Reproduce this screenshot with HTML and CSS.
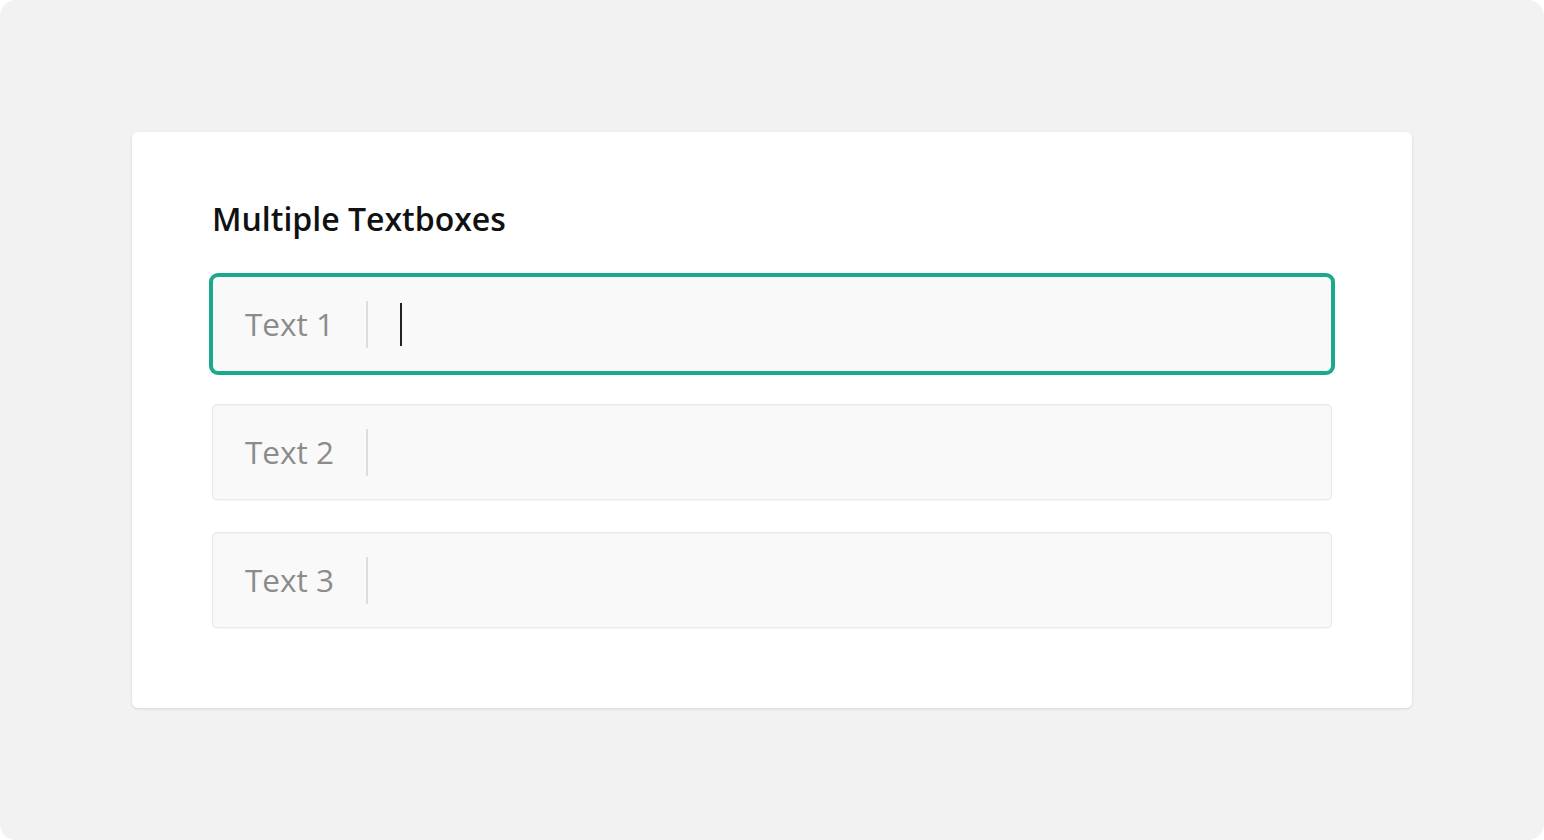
FILE: index.html
```
<!DOCTYPE html>
<html lang="en">
<head>
    <meta charset="UTF-8">
    <meta name="viewport" content="width=device-width, initial-scale=1.0">
    <title>Multiple Textboxes</title>
    <link rel="stylesheet" href="styles.css">
</head>
<body>
    <div class="frame">
        <div class="card">
            <h1 class="card-title">Multiple Textboxes</h1>

            <div class="field-list">
                <div class="field is-focused">
                    <span class="field-label">Text 1</span>
                    <span class="field-divider"></span>
                    <span class="field-value"><span class="caret"></span></span>
                </div>
                <div class="field">
                    <span class="field-label">Text 2</span>
                    <span class="field-divider"></span>
                    <span class="field-value"></span>
                </div>
                <div class="field">
                    <span class="field-label">Text 3</span>
                    <span class="field-divider"></span>
                    <span class="field-value"></span>
                </div>
            </div>
        </div>
    </div>
</body>
</html>
```

FILE: styles.css
```
* {
    margin: 0;
    padding: 0;
    box-sizing: border-box;
}

body {
    font-family: 'Open Sans', 'Noto Sans', sans-serif;
    background: #ffffff;
    height: 100vh;
}

.frame {
    height: 100%;
    background: #f2f2f2;
    border-radius: 16px;
    display: flex;
    align-items: center;
    justify-content: center;
}

.card {
    width: 1280px;
    height: 576px;
    background: #ffffff;
    border-radius: 6px;
    box-shadow: 0 1px 3px rgba(0, 0, 0, 0.12);
    padding: 67px 80px 80px;
}

.card-title {
    font-size: 32px;
    font-weight: 600;
    line-height: 40px;
    color: #111111;
    margin-bottom: 37px;
}

.field-list {
    display: flex;
    flex-direction: column;
    gap: 32px;
}

.field {
    height: 96px;
    display: flex;
    align-items: center;
    background: #f9f9f9;
    border: 1px solid #e9e9e9;
    border-radius: 5px;
    box-shadow: inset 0 1px 1px rgba(0, 0, 0, 0.03), 0 1px 2px rgba(0, 0, 0, 0.04);
    padding: 0 32px;
}

.field.is-focused {
    border-color: #1aa98a;
    box-shadow: 0 0 0 3px #1aa98a;
    border-radius: 6px;
}

.field-label {
    font-size: 31.5px;
    color: #8c8c8c;
    line-height: 38px;
}

.field-divider {
    width: 2px;
    height: 47px;
    background: #dddddd;
    margin: 0 32px 0 32px;
}

.field-value {
    flex: 1;
    display: flex;
    align-items: center;
}

.caret {
    width: 2px;
    height: 43px;
    background: #222222;
}
```
